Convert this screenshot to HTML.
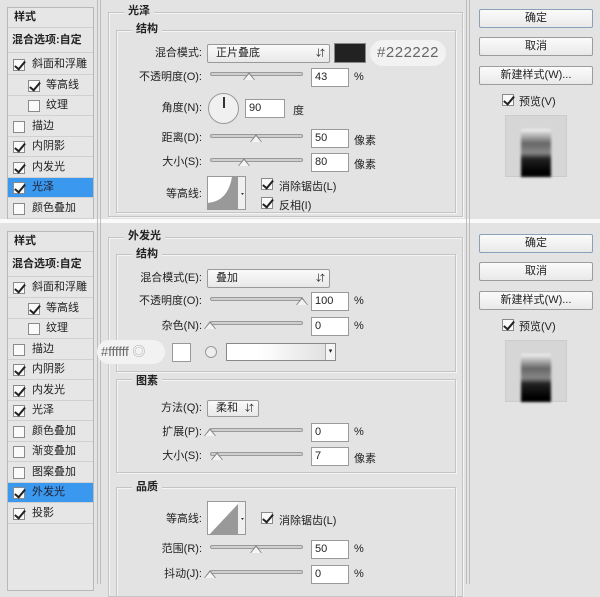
<!DOCTYPE html>
<html><head><meta charset="utf-8"><style>
*{box-sizing:border-box;margin:0;padding:0}
body{width:600px;height:584px;background:#e3e3e3;position:relative;overflow:hidden;font-family:"Liberation Sans","Noto Sans CJK SC",sans-serif;font-size:11px;color:#222}
.a{position:absolute}
.lp{position:absolute;left:7px;width:87px;border:1px solid #b8b8b8;background:#e6e6e6}
.it{position:absolute;left:0;width:85px;height:20px;border-bottom:1px solid #d0d0d0;line-height:19px;padding-left:24px;white-space:nowrap}
.it.sel{background:#3a98ef;color:#223}
.cb{position:absolute;width:12px;height:12px;border:1px solid #8a8a8a;background:#fafafa}
.cb.on::after{content:"";position:absolute;left:3px;top:-1px;width:4px;height:9px;border:solid #222;border-width:0 2px 2px 0;transform:rotate(40deg)}
.grp{position:absolute;border:1px solid #c4c4c4;box-shadow:inset 1px 1px 0 #f4f4f4,1px 1px 0 #f4f4f4}
.lg{position:absolute;background:#e3e3e3;padding:0 4px;font-weight:600;line-height:13px}
.lb{position:absolute;text-align:right;width:100px;line-height:14px;white-space:nowrap}
.sl{position:absolute;height:4px;border:1px solid #9a9a9a;background:#cfcfcf;border-radius:2px}
.th{position:absolute;width:0;height:0;border-left:6px solid transparent;border-right:6px solid transparent;border-bottom:8px solid #888}
.th::after{content:"";position:absolute;left:-5px;top:2px;border-left:5px solid transparent;border-right:5px solid transparent;border-bottom:6px solid #f4f4f4}
.in{position:absolute;width:38px;height:19px;border:1px solid #9a9a9a;background:#fff;line-height:17px;padding-left:3px}
.sel2{position:absolute;height:19px;border:1px solid #9a9a9a;background:linear-gradient(#fafafa,#e8e8e8);line-height:17px;padding-left:8px;border-radius:2px}
.sel2 i{position:absolute;right:4px;top:0;font-style:normal;font-size:9px}
.btn{position:absolute;left:479px;width:114px;height:19px;border:1px solid #9c9c9c;background:linear-gradient(#fbfbfb,#e9e9e9);text-align:center;line-height:17px;border-radius:2px}
.pv{position:absolute;left:505px;width:62px;height:62px;background:#d6d6d6;border:1px solid #ccc}
.pv b{position:absolute;left:15px;top:13px;width:30px;height:48px;background:linear-gradient(#f4f4f4 0,#bbb 12%,#666 30%,#888 50%,#222 62%,#000 90%);filter:blur(1.4px)}
.vl{position:absolute;width:1px;background:#bdbdbd}
</style></head><body>

<div class="a" style="left:0;top:219px;width:600px;height:4px;background:#fafafa"></div>
<div class="vl" style="left:97px;top:0;height:584px"></div><div class="vl" style="left:100px;top:0;height:584px"></div>
<div class="vl" style="left:466px;top:0;height:584px"></div><div class="vl" style="left:469px;top:0;height:584px"></div>

<div class="lp" style="top:7px;height:212px">
 <div class="it" style="top:0;padding-left:6px;font-weight:600">样式</div>
 <div class="it" style="top:21px;height:24px;padding-left:4px;line-height:23px;font-weight:600">混合选项:自定</div>
 <div class="it" style="top:47px"><span class="cb on" style="left:5px;top:4px"></span>斜面和浮雕</div>
 <div class="it" style="top:68px;padding-left:38px"><span class="cb on" style="left:20px;top:4px"></span>等高线</div>
 <div class="it" style="top:88px;padding-left:38px"><span class="cb" style="left:20px;top:4px"></span>纹理</div>
 <div class="it" style="top:109px"><span class="cb" style="left:5px;top:4px"></span>描边</div>
 <div class="it" style="top:129px"><span class="cb on" style="left:5px;top:4px"></span>内阴影</div>
 <div class="it" style="top:150px"><span class="cb on" style="left:5px;top:4px"></span>内发光</div>
 <div class="it sel" style="top:170px"><span class="cb on" style="left:5px;top:4px"></span>光泽</div>
 <div class="it" style="top:191px"><span class="cb" style="left:5px;top:4px"></span>颜色叠加</div>
</div>

<div class="grp" style="left:108px;top:12px;width:355px;height:205px"></div>
<div class="lg" style="left:124px;top:5px">光泽</div>
<div class="grp" style="left:116px;top:30px;width:340px;height:183px"></div>
<div class="lg" style="left:132px;top:23px">结构</div>

<div class="lb" style="left:102px;top:46px">混合模式:</div>
<div class="sel2" style="left:207px;top:44px;width:123px">正片叠底<i>&#8693;</i></div>
<div class="a" style="left:334px;top:43px;width:32px;height:20px;background:#222;border:1px solid #888"></div>
<div class="a" style="left:370px;top:40px;width:76px;height:26px;background:#f2f2f2;border-radius:13px;color:#666;font-size:15px;line-height:26px;text-align:center;letter-spacing:.5px">#222222</div>

<div class="lb" style="left:102px;top:70px">不透明度(O):</div>
<div class="sl" style="left:210px;top:72px;width:93px"></div><div class="th" style="left:243px;top:72px"></div>
<div class="in" style="left:311px;top:68px">43</div><div class="a" style="left:354px;top:71px">%</div>

<div class="lb" style="left:102px;top:101px">角度(N):</div>
<div class="a" style="left:208px;top:93px;width:31px;height:31px;border-radius:50%;border:1px solid #999;background:#f0f0f0"></div>
<div class="a" style="left:223px;top:97px;width:2px;height:11px;background:#333"></div>
<div class="in" style="left:245px;top:99px;width:40px">90</div><div class="a" style="left:293px;top:102px">度</div>

<div class="lb" style="left:102px;top:131px">距离(D):</div>
<div class="sl" style="left:210px;top:134px;width:93px"></div><div class="th" style="left:250px;top:134px"></div>
<div class="in" style="left:311px;top:129px">50</div><div class="a" style="left:354px;top:132px">像素</div>

<div class="lb" style="left:102px;top:155px">大小(S):</div>
<div class="sl" style="left:210px;top:158px;width:93px"></div><div class="th" style="left:238px;top:158px"></div>
<div class="in" style="left:311px;top:153px">80</div><div class="a" style="left:354px;top:156px">像素</div>

<div class="lb" style="left:102px;top:187px">等高线:</div>
<div class="a" style="left:207px;top:176px;width:39px;height:34px;border:1px solid #999;background:#fff;overflow:hidden">
 <svg width="39" height="34"><path d="M0 34 L0 26 Q20 24 24 0 L30 0 L30 34Z" fill="#999"/><rect x="30" y="0" width="9" height="34" fill="#f0f0f0"/><path d="M33 16 l3 0 l-1.5 2z" fill="#333"/></svg></div>
<span class="cb on" style="left:261px;top:178px"></span><div class="a" style="left:279px;top:178px">消除锯齿(L)</div>
<span class="cb on" style="left:261px;top:197px"></span><div class="a" style="left:279px;top:197px">反相(I)</div>

<div class="btn" style="top:9px;border-color:#8aa0b8">确定</div>
<div class="btn" style="top:37px">取消</div>
<div class="btn" style="top:66px">新建样式(W)...</div>
<span class="cb on" style="left:502px;top:94px"></span><div class="a" style="left:519px;top:93px">预览(V)</div>
<div class="pv" style="top:115px"><b></b></div>

<div class="lp" style="top:231px;height:360px">
 <div class="it" style="top:0;padding-left:6px;font-weight:600">样式</div>
 <div class="it" style="top:21px;height:24px;padding-left:4px;line-height:23px;font-weight:600">混合选项:自定</div>
 <div class="it" style="top:46px"><span class="cb on" style="left:5px;top:4px"></span>斜面和浮雕</div>
 <div class="it" style="top:67px;padding-left:38px"><span class="cb on" style="left:20px;top:4px"></span>等高线</div>
 <div class="it" style="top:87px;padding-left:38px"><span class="cb" style="left:20px;top:4px"></span>纹理</div>
 <div class="it" style="top:108px"><span class="cb" style="left:5px;top:4px"></span>描边</div>
 <div class="it" style="top:128px"><span class="cb on" style="left:5px;top:4px"></span>内阴影</div>
 <div class="it" style="top:149px"><span class="cb on" style="left:5px;top:4px"></span>内发光</div>
 <div class="it" style="top:169px"><span class="cb on" style="left:5px;top:4px"></span>光泽</div>
 <div class="it" style="top:190px"><span class="cb" style="left:5px;top:4px"></span>颜色叠加</div>
 <div class="it" style="top:210px"><span class="cb" style="left:5px;top:4px"></span>渐变叠加</div>
 <div class="it" style="top:231px"><span class="cb" style="left:5px;top:4px"></span>图案叠加</div>
 <div class="it sel" style="top:251px"><span class="cb on" style="left:5px;top:4px"></span>外发光</div>
 <div class="it" style="top:272px"><span class="cb on" style="left:5px;top:4px"></span>投影</div>
</div>

<div class="grp" style="left:108px;top:237px;width:355px;height:360px"></div>
<div class="lg" style="left:124px;top:230px">外发光</div>
<div class="grp" style="left:116px;top:254px;width:340px;height:118px"></div>
<div class="lg" style="left:132px;top:248px">结构</div>

<div class="lb" style="left:102px;top:271px">混合模式(E):</div>
<div class="sel2" style="left:207px;top:269px;width:123px">叠加<i>&#8693;</i></div>

<div class="lb" style="left:102px;top:294px">不透明度(O):</div>
<div class="sl" style="left:210px;top:297px;width:93px"></div><div class="th" style="left:296px;top:297px"></div>
<div class="in" style="left:311px;top:292px">100</div><div class="a" style="left:354px;top:295px">%</div>

<div class="lb" style="left:102px;top:319px">杂色(N):</div>
<div class="sl" style="left:210px;top:321px;width:93px"></div><div class="th" style="left:204px;top:321px"></div>
<div class="in" style="left:311px;top:317px">0</div><div class="a" style="left:354px;top:320px">%</div>

<div class="a" style="left:97px;top:340px;width:68px;height:24px;background:#f2f2f2;border-radius:12px;color:#666;font-size:13px;line-height:24px;padding-left:4px">#ffffff <span style="color:#aaa">◎</span></div>
<div class="a" style="left:172px;top:343px;width:19px;height:19px;background:#fff;border:1px solid #999"></div>
<div class="a" style="left:205px;top:346px;width:12px;height:12px;border-radius:50%;border:1px solid #999;background:#eee"></div>
<div class="a" style="left:226px;top:343px;width:110px;height:18px;border:1px solid #888;background:linear-gradient(90deg,#fff 30%,#ddd)"><div style="position:absolute;right:0;top:0;width:10px;height:16px;background:#f4f4f4;border-left:1px solid #aaa;font-size:7px;text-align:center;line-height:16px">▾</div></div>

<div class="grp" style="left:116px;top:379px;width:340px;height:94px"></div>
<div class="lg" style="left:132px;top:375px">图素</div>
<div class="lb" style="left:102px;top:401px">方法(Q):</div>
<div class="sel2" style="left:207px;top:400px;width:52px;height:17px;line-height:15px">柔和<i>&#8693;</i></div>
<div class="lb" style="left:102px;top:425px">扩展(P):</div>
<div class="sl" style="left:210px;top:428px;width:93px"></div><div class="th" style="left:204px;top:428px"></div>
<div class="in" style="left:311px;top:423px">0</div><div class="a" style="left:354px;top:426px">%</div>
<div class="lb" style="left:102px;top:449px">大小(S):</div>
<div class="sl" style="left:210px;top:452px;width:93px"></div><div class="th" style="left:211px;top:452px"></div>
<div class="in" style="left:311px;top:447px">7</div><div class="a" style="left:354px;top:450px">像素</div>

<div class="grp" style="left:116px;top:487px;width:340px;height:110px"></div>
<div class="lg" style="left:132px;top:481px">品质</div>
<div class="lb" style="left:102px;top:512px">等高线:</div>
<div class="a" style="left:207px;top:501px;width:39px;height:34px;border:1px solid #999;background:#fff;overflow:hidden">
 <svg width="39" height="34"><path d="M0 34 L30 2 L30 34Z" fill="#999"/><rect x="30" y="0" width="9" height="34" fill="#f0f0f0"/><path d="M33 16 l3 0 l-1.5 2z" fill="#333"/></svg></div>
<span class="cb on" style="left:261px;top:512px"></span><div class="a" style="left:279px;top:512px">消除锯齿(L)</div>
<div class="lb" style="left:102px;top:542px">范围(R):</div>
<div class="sl" style="left:210px;top:545px;width:93px"></div><div class="th" style="left:250px;top:545px"></div>
<div class="in" style="left:311px;top:540px">50</div><div class="a" style="left:354px;top:543px">%</div>
<div class="lb" style="left:102px;top:567px">抖动(J):</div>
<div class="sl" style="left:210px;top:570px;width:93px"></div><div class="th" style="left:204px;top:570px"></div>
<div class="in" style="left:311px;top:565px">0</div><div class="a" style="left:354px;top:568px">%</div>

<div class="btn" style="top:234px;border-color:#8aa0b8">确定</div>
<div class="btn" style="top:262px">取消</div>
<div class="btn" style="top:291px">新建样式(W)...</div>
<span class="cb on" style="left:502px;top:319px"></span><div class="a" style="left:519px;top:318px">预览(V)</div>
<div class="pv" style="top:340px"><b></b></div>
</body></html>
